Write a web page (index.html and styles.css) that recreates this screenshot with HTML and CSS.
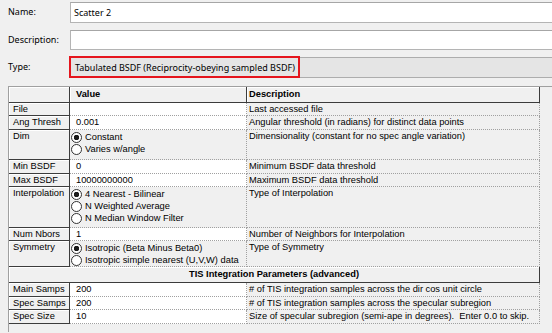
FILE: index.html
```html
<!DOCTYPE html>
<html lang="en">
<head>
  <meta charset="UTF-8">
  <title>Scatter Properties</title>
  <link rel="stylesheet" href="styles.css">
</head>
<body>

  <!-- Object properties -->
  <div class="props">
    <div class="prop-row">
      <div class="prop-label">Name:</div>
      <div class="prop-field text-field">Scatter 2</div>
    </div>
    <div class="prop-row">
      <div class="prop-label">Description:</div>
      <div class="prop-field text-field short"></div>
    </div>
    <div class="prop-row type-row">
      <div class="prop-label">Type:</div>
      <div class="prop-field combo">
        Tabulated BSDF (Reciprocity-obeying sampled BSDF)
        <span class="highlight"></span>
      </div>
    </div>
  </div>

  <!-- Parameter grid -->
  <div class="panel">
    <table class="grid">
      <colgroup>
        <col class="c-key">
        <col class="c-val">
        <col class="c-desc">
      </colgroup>
      <tr class="head">
        <th></th>
        <th>Value</th>
        <th>Description</th>
      </tr>
      <tr class="r-a">
        <td class="key">File</td>
        <td class="val"></td>
        <td class="desc">Last accessed file</td>
      </tr>
      <tr class="r-b">
        <td class="key">Ang Thresh</td>
        <td class="val">0.001</td>
        <td class="desc">Angular threshold (in radians) for distinct data points</td>
      </tr>
      <tr class="r-dim">
        <td class="key">Dim</td>
        <td class="val choices">
          <div class="radio on">Constant</div>
          <div class="radio">Varies w/angle</div>
        </td>
        <td class="desc">Dimensionality (constant for no spec angle variation)</td>
      </tr>
      <tr class="r-b">
        <td class="key">Min BSDF</td>
        <td class="val">0</td>
        <td class="desc">Minimum BSDF data threshold</td>
      </tr>
      <tr class="r-a">
        <td class="key">Max BSDF</td>
        <td class="val">10000000000</td>
        <td class="desc">Maximum BSDF data threshold</td>
      </tr>
      <tr class="r-interp">
        <td class="key">Interpolation</td>
        <td class="val choices">
          <div class="radio on">4 Nearest - Bilinear</div>
          <div class="radio">N Weighted Average</div>
          <div class="radio">N Median Window Filter</div>
        </td>
        <td class="desc">Type of Interpolation</td>
      </tr>
      <tr class="r-a">
        <td class="key">Num Nbors</td>
        <td class="val">1</td>
        <td class="desc">Number of Neighbors for Interpolation</td>
      </tr>
      <tr class="r-sym">
        <td class="key">Symmetry</td>
        <td class="val choices">
          <div class="radio on">Isotropic (Beta Minus Beta0)</div>
          <div class="radio">Isotropic simple nearest (U,V,W) data</div>
        </td>
        <td class="desc">Type of Symmetry</td>
      </tr>
      <tr class="section">
        <th colspan="3">TIS Integration Parameters (advanced)</th>
      </tr>
      <tr class="r-b">
        <td class="key">Main Samps</td>
        <td class="val">200</td>
        <td class="desc"># of TIS integration samples across the dir cos unit circle</td>
      </tr>
      <tr class="r-a">
        <td class="key">Spec Samps</td>
        <td class="val">200</td>
        <td class="desc"># of TIS integration samples across the specular subregion</td>
      </tr>
      <tr class="r-b">
        <td class="key">Spec Size</td>
        <td class="val">10</td>
        <td class="desc">Size of specular subregion (semi-ape in degrees).&nbsp; Enter 0.0 to skip.</td>
      </tr>
    </table>
  </div>

</body>
</html>
```

FILE: styles.css
```css
body {
  margin: 0;
  background: #f0f0f0;
  color: #000;
  font-family: "Noto Sans", "Open Sans", sans-serif;
  overflow: hidden;
  height: 333px;
}

/* top property rows */
.props {
  padding-top: 2px;
  display: flex;
  flex-direction: column;
  gap: 7px;
  overflow: hidden;
}

.prop-row {
  display: flex;
  align-items: center;
}

.prop-label {
  width: 62px;
  padding-left: 8px;
  font-size: 9px;
  margin-top: -2px;
}

.prop-field {
  flex: 1;
  margin-right: -6px;
  box-sizing: border-box;
  height: 21px;
  font-size: 9px;
  line-height: 19px;
  padding-left: 3px;
}

.text-field {
  background: #fff;
  border: 1px solid #b4b4b4;
  border-top-color: #a6a6a6;
}

.text-field.short {
  height: 20px;
}

.combo {
  position: relative;
  background: #e5e5e5;
  border: 1px solid #adadad;
  padding-left: 4px;
}

.highlight {
  position: absolute;
  left: -2px;
  top: -2px;
  width: 231px;
  height: 22px;
  border: 2px solid #e5151d;
  box-sizing: border-box;
}

/* parameter grid */
.panel {
  margin: 8px 0 0 8px;
  border-top: 1px solid #a0a0a0;
  border-left: 1px solid #a0a0a0;
  height: 245px;
}

.grid {
  border-collapse: separate;
  border-spacing: 0;
  table-layout: fixed;
  width: 531px;
  font-family: "Liberation Sans", Arial, sans-serif;
  font-size: 9.3px;
}

.c-key { width: 61px; }
.c-val { width: 177px; }
.c-desc { width: 293px; }

.grid th,
.grid td {
  padding: 0;
  vertical-align: top;
  text-align: left;
  line-height: 12px;
  white-space: nowrap;
  overflow: hidden;
}

.grid th {
  height: 15px;
  line-height: 15px;
  font-weight: bold;
  background: #f0f0f0;
  border-right: 1px solid #3c3c3c;
  border-bottom: 1px solid #3c3c3c;
  box-shadow: inset 1px 1px 0 #fff;
  padding-left: 6px;
}

.grid th:last-child {
  padding-left: 2px;
}

.grid .section th {
  text-align: center;
  padding-left: 0;
}

.key {
  background: #f0f0f0;
  border-right: 1px solid #3c3c3c;
  border-bottom: 1px solid #3c3c3c;
  box-shadow: inset 1px 1px 0 #fff;
  padding-left: 4px !important;
}

.val {
  background: #fff;
  border-right: 1px dotted #a0a0a0;
  border-bottom: 1px dotted #a0a0a0;
  padding-left: 6px !important;
}

.desc {
  background: #f0f0f0;
  border-right: 1px dotted #a0a0a0;
  border-bottom: 1px dotted #a0a0a0;
  padding-left: 2px !important;
}

.r-a td { height: 12px; }
.r-b td { height: 13px; }
.r-dim td { height: 29px; }
.r-interp td { height: 40px; }
.r-sym td { height: 25px; }

.val.choices {
  background: #f0f0f0;
  padding: 1px 0 0 1px !important;
  height: auto;
}

.radio {
  display: flex;
  align-items: center;
  gap: 3px;
  height: 12px;
}

.radio::before {
  content: "";
  width: 9px;
  height: 9px;
  border: 1px solid #333;
  border-radius: 50%;
  background: #fff;
  box-sizing: content-box;
  flex: none;
}

.radio.on::before {
  background: radial-gradient(circle, #1a1a1a 0 2.5px, #fff 3px);
}
```
